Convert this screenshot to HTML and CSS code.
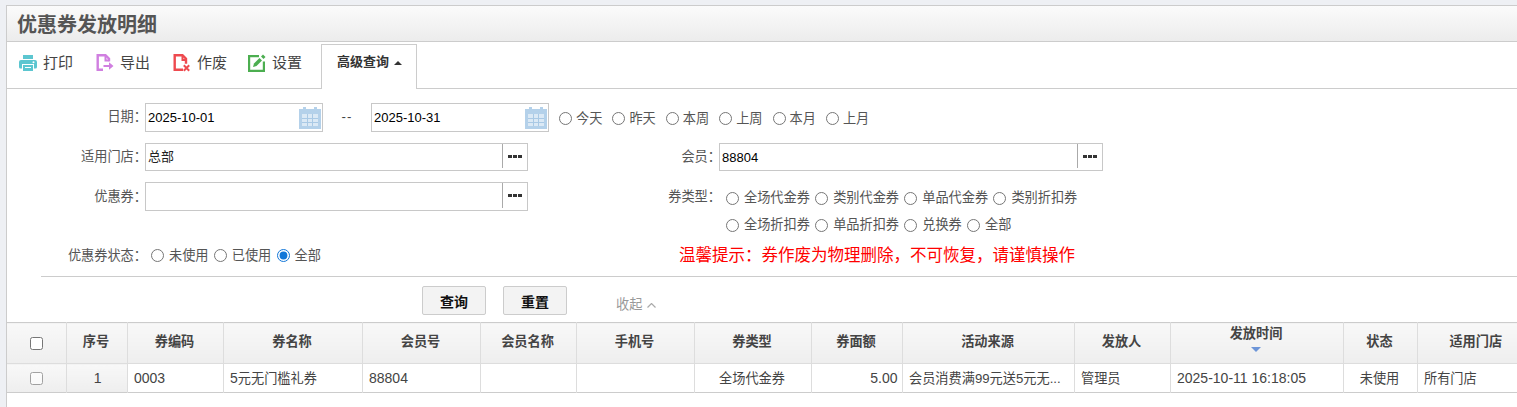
FILE: index.html
```html
<!DOCTYPE html>
<html lang="zh-CN">
<head>
<meta charset="utf-8">
<title>优惠券发放明细</title>
<link rel="stylesheet" href="styles.css">
</head>
<body>
<div class="panel">
  <h1 class="title">优惠券发放明细</h1>
  <div class="toolbar">
    <a class="tool tool-print">
      <svg class="ico" viewBox="0 0 18 18"><path fill="#5cc6d0" d="M4 1h10v4H4z"/><path fill="#5cc6d0" d="M2 6h14a2 2 0 0 1 2 2v5a1.500 1.500 0 0 1-1.500 1.500H15V10H3v4.500H1.500A1.500 1.500 0 0 1 0 13V8a2 2 0 0 1 2-2z"/><path fill="#5cc6d0" d="M4 11h10v6H4z"/><path fill="#fff" d="M6 13h6v1H6z"/><circle cx="14.500" cy="8.300" r="1" fill="#fff"/></svg>
      <span>打印</span>
    </a>
    <a class="tool tool-export">
      <svg class="ico" viewBox="0 0 18 18"><path fill="none" stroke="#d07fe0" stroke-width="2.400" d="M7 15.800H1.700V1.200h7.800l3.500 3.500v2.500"/><path fill="#d07fe0" d="M8.500 1h2v4.500h3v2h-5z"/><path fill="#d07fe0" d="M7.500 11h5.500V8.300l4.500 3.700-4.500 3.700V13H7.500z"/></svg>
      <span>导出</span>
    </a>
    <a class="tool tool-void">
      <svg class="ico" viewBox="0 0 18 18"><path fill="none" stroke="#ee4a4f" stroke-width="2.400" d="M10 15.800H1.700V1.200h7.800l3.500 3.500v5"/><path fill="#ee4a4f" d="M8.500 1h2v4h3v2h-5z"/><path stroke="#ee4a4f" stroke-width="2" d="M10.800 11.300l5.400 5.400m0-5.400l-5.400 5.400"/></svg>
      <span>作废</span>
    </a>
    <a class="tool tool-set">
      <svg class="ico ico-set" viewBox="0 0 18 18"><path fill="none" stroke="#4cae50" stroke-width="2.200" d="M11 2.100H1.100v14.800h14.800V7.500"/><path fill="#4cae50" d="M5 13l1-3.500 5.500-5.500 2.500 2.500L8.500 12z"/><path fill="#4cae50" d="M13 2.500L15 .5l2.500 2.500-2 2z"/></svg>
      <span>设置</span>
    </a>
    <div class="tab">高级查询<i class="caret"></i></div>
  </div>

  <form class="form">
    <div class="row row-date">
      <label class="lbl">日期：</label>
      <div class="box box-date">
        <input class="inp" type="text" value="2025-10-01">
        <svg class="cal" viewBox="0 0 22 22"><path fill="#b4d1ea" d="M0 2h4V0h3v2h8V0h3v2h4v20H0z"/><path fill="#dbe9f5" d="M3 7h16v12H3z"/><path fill="#a9c9e5" d="M3 11h16v1H3zM3 15h16v1H3zM8 7h1v12H8zM13 7h1v12h-1z"/></svg>
      </div>
      <span class="dash">--</span>
      <div class="box box-date">
        <input class="inp" type="text" value="2025-10-31">
        <svg class="cal" viewBox="0 0 22 22"><path fill="#b4d1ea" d="M0 2h4V0h3v2h8V0h3v2h4v20H0z"/><path fill="#dbe9f5" d="M3 7h16v12H3z"/><path fill="#a9c9e5" d="M3 11h16v1H3zM3 15h16v1H3zM8 7h1v12H8zM13 7h1v12h-1z"/></svg>
      </div>
      <div class="radios radios-quick">
        <label class="rad"><input type="radio" name="q"><span>今天</span></label>
        <label class="rad"><input type="radio" name="q"><span>昨天</span></label>
        <label class="rad"><input type="radio" name="q"><span>本周</span></label>
        <label class="rad"><input type="radio" name="q"><span>上周</span></label>
        <label class="rad"><input type="radio" name="q"><span>本月</span></label>
        <label class="rad"><input type="radio" name="q"><span>上月</span></label>
      </div>
    </div>

    <div class="row row-store">
      <label class="lbl">适用门店：</label>
      <div class="box box-pick box-pick-short">
        <input class="inp inp-cjk" type="text" value="总部">
        <span class="more"><svg width="14" height="3" viewBox="0 0 14 3"><path fill="#333" d="M0 0h4v3H0zM5 0h4v3H5zM10 0h4v3h-4z"/></svg></span>
      </div>
      <label class="lbl2">会员：</label>
      <div class="box box-pick box-pick-short box-member">
        <input class="inp" type="text" value="88804">
        <span class="more"><svg width="14" height="3" viewBox="0 0 14 3"><path fill="#333" d="M0 0h4v3H0zM5 0h4v3H5zM10 0h4v3h-4z"/></svg></span>
      </div>
    </div>

    <div class="row row-coupon">
      <label class="lbl">优惠券：</label>
      <div class="box box-pick">
        <input class="inp" type="text" value="">
        <span class="more"><svg width="14" height="3" viewBox="0 0 14 3"><path fill="#333" d="M0 0h4v3H0zM5 0h4v3H5zM10 0h4v3h-4z"/></svg></span>
      </div>
      <label class="lbl2 lbl2-type">券类型：</label>
      <div class="types">
        <div class="radios">
          <label class="rad"><input type="radio" name="t"><span>全场代金券</span></label>
          <label class="rad"><input type="radio" name="t"><span>类别代金券</span></label>
          <label class="rad"><input type="radio" name="t"><span>单品代金券</span></label>
          <label class="rad"><input type="radio" name="t"><span>类别折扣券</span></label>
        </div>
        <div class="radios">
          <label class="rad"><input type="radio" name="t"><span>全场折扣券</span></label>
          <label class="rad"><input type="radio" name="t"><span>单品折扣券</span></label>
          <label class="rad"><input type="radio" name="t"><span>兑换券</span></label>
          <label class="rad"><input type="radio" name="t"><span>全部</span></label>
        </div>
      </div>
    </div>

    <div class="row row-status">
      <label class="lbl">优惠券状态：</label>
      <div class="radios radios-status">
        <label class="rad"><input type="radio" name="s"><span>未使用</span></label>
        <label class="rad"><input type="radio" name="s"><span>已使用</span></label>
        <label class="rad"><input type="radio" name="s" checked><span>全部</span></label>
      </div>
      <p class="tip">温馨提示：券作废为物理删除，不可恢复，请谨慎操作</p>
    </div>

    <div class="actions">
      <button class="btn" type="button">查询</button>
      <button class="btn" type="button">重置</button>
      <a class="fold">收起<svg width="9" height="5" viewBox="0 0 9 5"><path fill="none" stroke="#aaa" stroke-width="1.200" d="M.5 4.500l4-4 4 4"/></svg></a>
    </div>
  </form>

  <table class="grid">
    <colgroup>
      <col class="c1"><col class="c2"><col class="c3"><col class="c4"><col class="c5"><col class="c6"><col class="c7"><col class="c8"><col class="c9"><col class="c10"><col class="c11"><col class="c12"><col class="c13"><col class="c14">
    </colgroup>
    <thead>
      <tr>
        <th><input class="chk" type="checkbox"></th>
        <th>序号</th>
        <th>券编码</th>
        <th>券名称</th>
        <th>会员号</th>
        <th>会员名称</th>
        <th>手机号</th>
        <th>券类型</th>
        <th>券面额</th>
        <th>活动来源</th>
        <th>发放人</th>
        <th class="sorted">发放时间<i class="sort"></i></th>
        <th>状态</th>
        <th>适用门店</th>
      </tr>
    </thead>
    <tbody>
      <tr>
        <td class="side"><input class="chk chk-row" type="checkbox"></td>
        <td class="side ctr"><span class="lat">1</span></td>
        <td><span class="lat">0003</span></td>
        <td><span class="lat">5</span>元无门槛礼券</td>
        <td><span class="lat">88804</span></td>
        <td></td>
        <td></td>
        <td class="ctr ctr-fit">全场代金券</td>
        <td class="rgt"><span class="lat">5.00</span></td>
        <td>会员消费满99元送5元无...</td>
        <td>管理员</td>
        <td><span class="lat">2025-10-11 16:18:05</span></td>
        <td class="ctr ctr-fit">未使用</td>
        <td>所有门店</td>
      </tr>
    </tbody>
  </table>
</div>
</body>
</html>
```

FILE: styles.css
```css
* { box-sizing: border-box; }
html, body { margin: 0; height: 100%; overflow: hidden; }
body {
  padding: 5px 0 0 6px;
  background: #eef0f4;
  font: 13.2px/1.4 "Liberation Sans", "Noto Sans CJK SC", sans-serif;
  color: #444;
}
.panel {
  height: 100%;
  background: #fff;
  border-top: 1px solid #ccc;
  border-left: 1px solid #ccc;
  overflow: hidden;
}
.title {
  margin: 0;
  height: 36px;
  padding-left: 10px;
  font-size: 20px;
  line-height: 38px;
  font-weight: 700;
  color: #555;
  background: linear-gradient(#fbfbfb, #ececec);
  border-bottom: 1px solid #ccc;
}
.toolbar {
  display: flex;
  align-items: flex-end;
  height: 47px;
  padding-left: 12px;
  border-bottom: 1px solid #ccc;
}
.tool {
  display: flex;
  align-items: center;
  align-self: flex-start;
  gap: 6px;
  height: 41px;
  font-size: 15px;
  color: #444;
}
.tool-print, .tool-export { margin-right: 23px; }
.tool-void { margin-right: 21px; }
.tool-set { margin-right: 19px; }
.ico { width: 18px; height: 18px; flex: none; }
.tab {
  display: flex;
  align-items: center;
  width: 96px;
  height: 45px;
  margin-bottom: -1px;
  padding: 0 0 9px 15px;
  background: #fff;
  border: 1px solid #ccc;
  border-bottom: 0;
  font-size: 13px;
  font-weight: 700;
  color: #333;
}
.caret {
  margin-left: 5px;
  border: 4px solid transparent;
  border-top: 0;
  border-bottom-color: #333;
}

.form { padding-top: 14px; }
.row { display: flex; align-items: center; }
.row-date { height: 29px; }
.row-store { height: 28px; margin-top: 11px; }
.row-coupon { height: 56px; margin-top: 11px; align-items: flex-start; }
.row-status { height: 28px; margin-top: 4px; }
.lbl { width: 140px; margin-right: -2px; flex: none; text-align: right; color: #555; }
.row-coupon .lbl { line-height: 29px; }
.lbl2 { width: 193px; margin-right: -2px; flex: none; text-align: right; color: #555; }
.lbl2-type { line-height: 29px; }
.box {
  display: flex;
  align-items: center;
  flex: none;
  background: #fff;
  border: 1px solid #c8c8c8;
}
.box-date { width: 178px; height: 29px; padding-right: 1px; }
.box-pick { width: 383px; height: 29px; }
.box-pick-short { height: 28px; }
.box-member { width: 384px; }
.inp {
  flex: 1;
  min-width: 0;
  height: 100%;
  padding: 0 0 0 2px;
  border: 0;
  outline: 0;
  background: transparent;
  font: 13px "Liberation Sans", "Noto Sans CJK SC", sans-serif;
  color: #000;
}
.inp-cjk { padding-bottom: 3px; color: #222; }
.cal { width: 22px; height: 22px; flex: none; }
.dash { width: 48px; flex: none; text-align: center; letter-spacing: 1px; color: #444; }
.more {
  display: flex;
  align-items: center;
  justify-content: center;
  width: 25px;
  flex: none;
  height: calc(100% - 2px);
  align-self: flex-start;
  border-left: 1px solid #aaa;
}
.radios { display: flex; align-items: center; gap: 5.2px; height: 27px; }
.rad { display: flex; align-items: center; gap: 5px; color: #555; }
.rad input { width: 13px; height: 13px; margin: 0; accent-color: #1277d8; flex: none; }
.radios-quick { margin: 3px 0 0 10px; gap: 10px; }
.radios-quick .rad { gap: 4px; }
.types { margin: 3px 0 0 7px; }
.radios-status { margin-left: 6px; }
.tip {
  margin: 0 0 0 358px;
  font-size: 16.5px;
  color: #f00;
}
.actions {
  display: flex;
  align-items: flex-start;
  gap: 17px;
  height: 46px;
  margin: 6px 0 0 34px;
  padding: 9px 0 0 381px;
  border-top: 1px solid #ccc;
}
.btn {
  width: 64px;
  height: 29px;
  padding: 0;
  background: #f3f3f3;
  border: 1px solid #ccc;
  border-radius: 2px;
  font: 700 14px "Liberation Sans", "Noto Sans CJK SC", sans-serif;
  color: #111;
}
.fold {
  display: flex;
  align-items: center;
  gap: 5px;
  margin: 10px 0 0 32px;
  color: #999;
}

.grid {
  table-layout: fixed;
  width: 1528px;
  border-collapse: collapse;
  border-top: 1px solid #ccc;
  border-bottom: 1px solid #ccc;
}
.c1 { width: 59px; }
.c2 { width: 61px; }
.c3 { width: 96px; }
.c4 { width: 139px; }
.c5 { width: 118px; }
.c6 { width: 96px; }
.c7 { width: 118px; }
.c8 { width: 117px; }
.c9 { width: 91px; }
.c10 { width: 172px; }
.c11 { width: 96px; }
.c12 { width: 173px; }
.c13 { width: 74px; }
.c14 { width: 118px; }
th, td {
  padding: 0 4px 0 6.5px;
  border-left: 1px solid #ddd;
  white-space: nowrap;
  overflow: hidden;
}
th:first-child, td:first-child { border-left: 0; padding: 0; text-align: center; }
th {
  height: 41px;
  padding: 0 6px 2px 5px;
  font-weight: 700;
  color: #444;
  text-align: center;
  background: linear-gradient(#f8f8f8, #eeeeee);
  border-bottom: 1px solid #ddd;
}
td { height: 29px; padding-top: 2px; color: #444; }
.side { background: linear-gradient(#f8f8f8, #eeeeee); }
.ctr { text-align: center; }
.ctr-fit { padding-left: 5px; padding-right: 6px; }
.rgt { text-align: right; }
.lat { font-size: 14px; }
.sorted { vertical-align: top; padding-top: 2px; line-height: 18px; }
.sort {
  display: block;
  width: 0;
  margin: 4px auto 0;
  border: 5px solid transparent;
  border-bottom: 0;
  border-top: 5px solid #6d95d8;
}
.chk { width: 13px; height: 13px; margin: 0; vertical-align: middle; }
.chk-row { opacity: .65; }
```
